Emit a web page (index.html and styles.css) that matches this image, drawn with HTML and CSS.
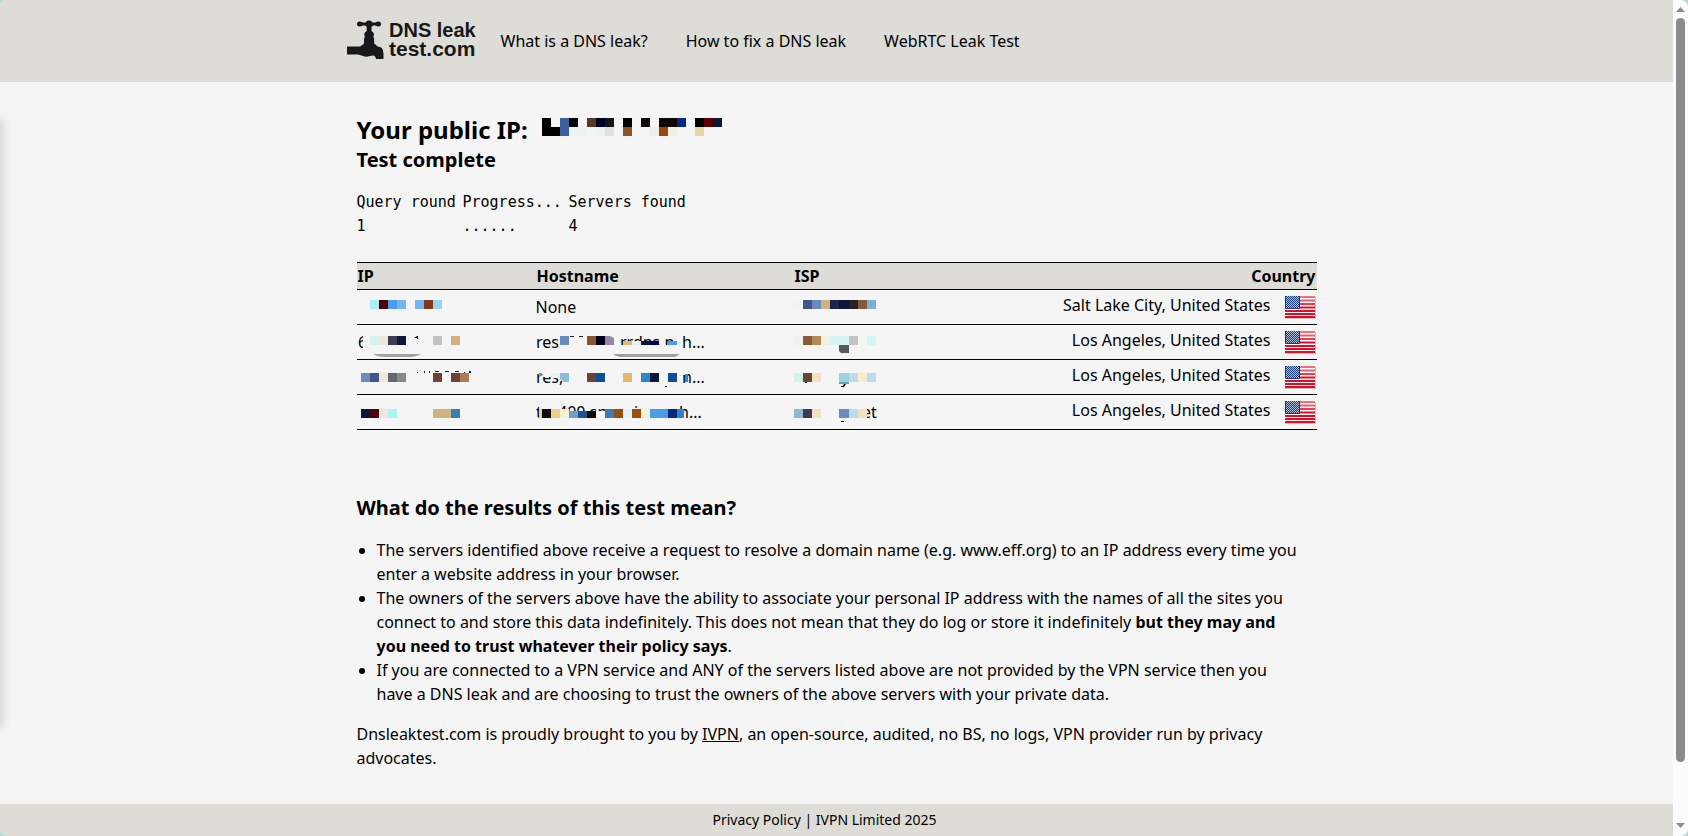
FILE: index.html
```html
<!DOCTYPE html>
<html lang="en">
<head>
<meta charset="utf-8">
<title>DNS leak test</title>
<link rel="stylesheet" href="styles.css">
</head>
<body>
<svg class="defs" aria-hidden="true">
  <defs>
    <pattern id="stars" width="2" height="2" patternUnits="userSpaceOnUse">
      <path fill="#1d3f7f" d="M0 0h2v2H0z"/><path fill="#aebbd8" d="M0 0h1v1H0zM1 1h1v1H1z"/>
    </pattern>
    <linearGradient id="gloss" x1="0" y1="0" x2="0" y2="1">
      <stop offset="0" stop-color="#fff" stop-opacity=".45"/><stop offset="1" stop-color="#fff" stop-opacity=".15"/>
    </linearGradient>
    <symbol id="flag" viewBox="0 0 32 25">
      <path fill="#c4c4c4" d="M1 2h31v22H1z"/>
      <path fill="#fff" d="M1 1h30v22H1z"/>
      <path stroke="#e00d24" stroke-width="2" d="M1 2h30M1 5.500h30M1 9h30M1 12.500h30M1 16h30M1 19h30M1 22h30"/>
      <path fill="url(#gloss)" d="M1 1h30v10H1z"/>
      <path fill="url(#stars)" d="M1 1h15v13H1z"/>
      <path fill="none" stroke="#17397e" d="M1.500 1v12.500h14V1"/>
    </symbol>
  </defs>
</svg>
<div class="window">
  <div class="page">
    <header class="site-header">
      <div class="container header-row">
        <a class="logo" href="#" aria-label="DNS leak test.com">
          <svg width="132" height="44" viewBox="0 0 132 44" fill="#181818">
            <path d="M10 6q0-2.500 2.500-2.500 2 0 3 1h3q1-2 3.500-2t3.500 2h3q1-1 3-1Q34 3.500 34 6t-2.500 2.500q-2 0-3-1H26L24.500 9v4q2.500 1 2.500 3.500l-.6 2.500.8 2v4.500q2 1.500 3.300 3 6 0 6 7V41h-7.500q-.5-3.500-3-3.500-1.500 0-3 .5-4 1.500-7 0-2.500-.8-5-1.500H0V28.500h13q2-1 4-3V21l.8-2-.6-2.500q0-2.500 2.500-3.500V9L18 7.500h-2.500q-1 1-3 1Q10 8.500 10 6z"/>
            <text x="42" y="19" class="logo-top">DNS leak</text>
            <text x="42" y="38" class="logo-bottom">test.com</text>
          </svg>
        </a>
        <nav class="nav">
          <a href="#">What is a DNS leak?</a>
          <a href="#">How to fix a DNS leak</a>
          <a href="#">WebRTC Leak Test</a>
        </nav>
      </div>
    </header>

    <main class="container content">
      <h1>Your public IP:
        <svg class="ip-mask" width="180" height="18" aria-hidden="true">
          <path d="M0 0h9v9h9v9H0zM27 0h9v9h-9zM81 0h9v9h-9zM153 0h9v9h-9z"/>
          <path fill="#3c5f9f" d="M18 0h9v18h-9z"/>
          <path fill="#5b3620" d="M45 0h9v9h-9z"/><path fill="#000024" d="M54 0h9v9h-9z"/><path fill="#181510" d="M63 0h9v9h-9z"/>
          <path fill="#100804" d="M99 0h9v9h-9zM117 0h18v9h-18z"/><path fill="#002a88" d="M135 0h9v9h-9z"/>
          <path fill="#5a0000" d="M162 0h9v9h-9z"/><path fill="#0a1638" d="M171 0h9v9h-9z"/>
          <path fill="#eaf4f2" d="M27 9h18v9H27zM54 9h9v9h-9z"/><path fill="#e0e0e2" d="M63 9h9v9h-9z"/>
          <path fill="#8a5528" d="M81 9h9v9h-9z"/><path fill="#eeeeec" d="M108 9h9v9h-9z"/>
          <path fill="#984a0c" d="M117 9h9v9h-9z"/><path fill="#f2eee2" d="M126 9h9v9h-9z"/><path fill="#e5d8a0" d="M153 9h9v9h-9z"/>
        </svg>
      </h1>
      <h2 class="status">Test complete</h2>

      <table class="progress">
        <tr><td>Query round</td><td>Progress...</td><td>Servers found</td></tr>
        <tr><td>1</td><td>......</td><td>4</td></tr>
      </table>

      <table class="results">
        <thead>
          <tr><th class="col-ip">IP</th><th class="col-host">Hostname</th><th class="col-isp">ISP</th><th class="col-country">Country</th></tr>
        </thead>
        <tbody>
          <tr>
            <td><svg class="mask" width="170" height="34">
              <path fill="#a8f0f3" d="M13 10h9v9h-9z"/><path fill="#4f0008" d="M22 10h9v9h-9z"/><path fill="#4a9de8" d="M31 10h9v9h-9z"/><path fill="#73b5f2" d="M40 10h9v9h-9zM58 10h9v9h-9z"/><path fill="#803818" d="M67 10h9v9h-9z"/><path fill="#96d5ee" d="M76 10h9v9h-9z"/></svg></td>
            <td class="host">None</td>
            <td><svg class="mask" width="90" height="34">
              <path fill="#f2f2f2" d="M0 12h8v6H0z"/><path fill="#3f5890" d="M9 10h9v9H9z"/><path fill="#6b8cba" d="M18 10h9v9h-9z"/><path fill="#d2b285" d="M27 10h9v9h-9z"/><path fill="#20244a" d="M36 10h9v9h-9z"/><path fill="#0c1838" d="M45 10h10v9H45z"/><path fill="#2f1a28" d="M55 10h9v9h-9z"/><path fill="#855a3c" d="M64 10h9v9h-9z"/><path fill="#7ab0d0" d="M73 10h9v9h-9z"/></svg></td>
            <td class="country"><span>Salt Lake City, United States</span><svg width="32" height="25"><use href="#flag"/></svg></td>
          </tr>
          <tr>
            <td><svg class="mask" width="170" height="34">
              <text x="1" y="23">6</text><path fill="#f5f5f5" d="M6 8h8v17H6z"/>
              <path d="M57 13l3-2h1v3h-1v-1z"/>
              <path fill="#d5f3f3" d="M13 11h9v9h-9z"/><path fill="#f0e6da" d="M22 11h9v9h-9z"/><path fill="#3c3c52" d="M31 11h9v9h-9z"/><path fill="#0c1838" d="M40 11h9v9h-9z"/><path fill="#bfc3c1" d="M76 11h9v9h-9z"/><path fill="#d2b27f" d="M94 11h9v9h-9z"/>
              <path fill="#a0a0a0" d="M16 29h48q-5 3-12 3H28q-7 0-12-3z"/></svg></td>
            <td><svg class="mask" width="180" height="34">
              <text x="0" y="23">res</text><text x="84" y="23">rrdns.n</text><text x="146" y="23">h...</text>
              <path fill="#f5f5f5" d="M84 20h62v8H84z"/>
              <path fill="#222" d="M24 11h4v1h-4zM34 11h4v1h-4zM43 11h4v1h-4z"/>
              <path fill="#6b8cba" d="M24 11h9v9h-9z"/><path fill="#865531" d="M51 11h9v9h-9z"/><path fill="#000018" d="M60 11h9v9h-9z"/><path fill="#9385ae" d="M69 11h5l4 2v7h-9z"/>
              <path fill="#e6b870" d="M87 16h9v4h-9z"/><path fill="#e8f0f0" d="M96 16h9v4h-9z"/><path fill="#0c1838" d="M105 16h9v4h-9z"/><path fill="#000050" d="M114 16h9v4h-9z"/><path fill="#4a9de8" d="M132 16h9v4h-9z"/><path fill="#d5f3ff" d="M141 16h4v4h-4z"/>
              <path fill="#a0a0a0" d="M77 29h67l-5 3H84q-5-1-7-3z"/></svg></td>
            <td><svg class="mask" width="90" height="34">
              <path fill="#f0f0f0" d="M0 11h9v9H0z"/><path fill="#865b38" d="M9 11h9v9H9z"/><path fill="#b58a55" d="M18 11h9v9h-9z"/><path fill="#f3f0e0" d="M27 11h9v9h-9z"/><path fill="#d5f6f6" d="M36 11h19v9H36zM73 11h9v9h-9z"/><path fill="#bfc3c1" d="M55 11h9v9h-9z"/><path fill="#55585c" d="M45 20h10v8h-8l-2-2z"/></svg></td>
            <td class="country"><span>Los Angeles, United States</span><svg width="32" height="25"><use href="#flag"/></svg></td>
          </tr>
          <tr>
            <td><svg class="mask" width="170" height="34">
              <path fill="#222" d="M60 12h1v1h-1zM67 11h1v2h-1zM72 11h1v2h-1zM78 11h4v1h-4zM88 11h4v1h-4zM98 11h4v1h-4zM107 12h1v1h-1zM112 11h2v2h-2z"/>
              <path fill="#6b8cba" d="M4 13h9v9H4z"/><path fill="#43568a" d="M13 13h9v9h-9z"/><path fill="#f0e6da" d="M22 13h9v9h-9z"/><path fill="#65676c" d="M31 13h9v9h-9z"/><path fill="#8a8a8a" d="M40 13h9v9h-9z"/><path fill="#6b4335" d="M76 13h9v9h-9zM94 13h9v9h-9z"/><path fill="#ad7d58" d="M103 13h9v9h-9z"/></svg></td>
            <td><svg class="mask" width="180" height="34">
              <text x="0" y="23">res,</text><text x="146" y="23">h...</text>
              <path fill="#f5f5f5" d="M7 12h8v5H7zM145 9h6v6h-6z"/><path fill="#b08060" d="M3 13h3v3H3z"/>
              <path fill="#e5f3f0" d="M15 13h9v5h-9z"/><path fill="#8dbcd4" d="M24 13h9v9h-5l-4-3z"/><path fill="#6b4335" d="M51 13h9v9h-9z"/><path fill="#0c4f98" d="M60 13h9v9h-9zM132 13h9v9h-9z"/><path fill="#e8b870" d="M87 13h9v9h-9z"/><path fill="#2b86d2" d="M105 13h9v9h-9zM149 14h3v8h-3z"/><path fill="#0c1838" d="M114 13h9v9h-9z"/><path d="M129 26h2v1h-2z"/></svg></td>
            <td><svg class="mask" width="90" height="34">
              <path fill="#cff5e6" d="M0 13h9v9H0z"/><path fill="#6b4335" d="M9 13h9v9H9z"/><path fill="#f2e0c0" d="M18 13h9v9h-9z"/><path fill="#98d5e0" d="M45 13h10v9H45z"/><path fill="#bcdcf4" d="M55 13h9v9h-9zM73 13h9v9h-9z"/><path fill="#f8ecca" d="M64 13h9v9h-9z"/><path fill="#6b9cba" d="M45 22h10v2H45z"/><path d="M11 22h2v1h-2zM50 24h2l-2 3h-3v-1h2z"/></svg></td>
            <td class="country"><span>Los Angeles, United States</span><svg width="32" height="25"><use href="#flag"/></svg></td>
          </tr>
          <tr>
            <td><svg class="mask" width="170" height="34">
              <path fill="#0c1838" d="M4 14h9v9H4z"/><path fill="#4f0008" d="M13 14h9v9h-9z"/><path fill="#f0e6da" d="M22 14h9v9h-9z"/><path fill="#a8f5f5" d="M31 14h9v9h-9z"/><path fill="#d0b27d" d="M76 14h18v9H76z"/><path fill="#3a7cb8" d="M94 14h9v9h-9z"/></svg></td>
            <td><svg class="mask" width="180" height="34">
              <text x="0" y="23">t</text><text x="22" y="23">400.sn</text><text x="98" y="23">i</text><text x="143" y="23">h...</text>
              <path fill="#f5f5f5" d="M22 16h118v10H22z"/>
              <path fill="#f2ce8c" d="M3 14h3v9H3zM15 14h9v9h-9z"/><path fill="#0f0c08" d="M6 14h9v9H6zM51 16h9v7h-9z"/><path fill="#f5f2cf" d="M24 14h9v9h-9zM105 14h9v9h-9z"/><path fill="#6ba2cc" d="M33 16h9v7h-9z"/><path fill="#1f529a" d="M42 16h9v7h-9z"/><path fill="#3a7cb8" d="M69 14h9v9h-9z"/><path fill="#984f12" d="M78 14h9v9h-9zM96 14h9v9h-9z"/><path fill="#e2f3f5" d="M87 14h9v9h-9z"/><path fill="#4a9de8" d="M114 14h18v9h-18z"/><path fill="#0c2a7c" d="M132 14h9v9h-9z"/><path fill="#2b86d2" d="M141 14h7v9h-7z"/></svg></td>
            <td><svg class="mask" width="90" height="34">
              <text x="68" y="23">et</text>
              <path fill="#f5f5f5" d="M64 12h9v13h-9z"/>
              <path fill="#8bbad6" d="M0 14h9v9H0z"/><path fill="#3c3c52" d="M9 14h9v9H9z"/><path fill="#f2e0c0" d="M18 14h9v9h-9zM64 14h9v9h-9z"/><path fill="#6b8cba" d="M45 14h10v9H45z"/><path fill="#bcdcf4" d="M55 14h9v9h-9z"/><path d="M47 26h3v1h-3z"/></svg></td>
            <td class="country"><span>Los Angeles, United States</span><svg width="32" height="25"><use href="#flag"/></svg></td>
          </tr>
        </tbody>
      </table>

      <h2 class="meaning">What do the results of this test mean?</h2>
      <ul>
        <li>The servers identified above receive a request to resolve a domain name (e.g. www.eff.org) to an IP address every time you enter a website address in your browser.</li>
        <li>The owners of the servers above have the ability to associate your personal IP address with the names of all the sites you connect to and store this data indefinitely. This does not mean that they do log or store it indefinitely <strong>but they may and you need to trust whatever their policy says</strong>.</li>
        <li>If you are connected to a VPN service and ANY of the servers listed above are not provided by the VPN service then you have a DNS leak and are choosing to trust the owners of the above servers with your private data.</li>
      </ul>
      <p>Dnsleaktest.com is proudly brought to you by <a href="#">IVPN</a>, an open-source, audited, no BS, no logs, VPN provider run by privacy advocates.</p>
    </main>

    <footer class="site-footer"><a href="#">Privacy Policy</a> | IVPN Limited 2025</footer>
    <div class="edge-shadow"></div>
  </div>
  <div class="scrollbar" aria-hidden="true">
    <svg width="9" height="6"><path fill="#8b8b8b" d="M4.500 0L9 5H0z"/></svg>
    <div class="track"><div class="thumb"></div></div>
    <svg width="9" height="6"><path fill="#8b8b8b" d="M0 0h9L4.500 5z"/></svg>
  </div>
</div>
</body>
</html>
```
FILE: styles.css
```css
* { box-sizing: border-box; }
body {
  margin: 0;
  background: #b9d9d3;
  color: #000;
  font: 16px/24px "Noto Sans", "Open Sans", sans-serif;
}
a { color: inherit; text-decoration: none; }
.defs { position: absolute; width: 0; height: 0; }
.window {
  display: flex;
  min-height: 100vh;
  border-radius: 8px;
  overflow: hidden;
  background: #f5f5f5;
}
.page {
  position: relative;
  flex: 1;
  display: flex;
  flex-direction: column;
  overflow: hidden;
}
.container { width: 100%; max-width: 960px; margin: 0 auto; }

.site-header { background: #dddcd7; height: 82px; }
.header-row { display: flex; align-items: flex-start; padding-top: 18px; }
.logo { margin-left: -10px; height: 46px; }
.logo svg { display: block; overflow: visible; }
.logo text { font-family: "Liberation Sans", Arial, sans-serif; font-weight: bold; }
.logo-top { font-size: 20px; }
.logo-bottom { font-size: 21px; }
.nav { display: flex; gap: 38px; margin-left: 22px; padding-top: 11px; }

.content { flex: 1; padding-top: 32px; }
h1, h2 { margin: 0; font-weight: bold; }
h1 { display: flex; align-items: flex-start; gap: 14px; font-size: 24px; line-height: 32px; }
.ip-mask { margin-top: 4px; }
.status { font-size: 20px; line-height: 28px; }

.progress { margin-top: 16px; border-collapse: collapse; font: 15px/24px "DejaVu Sans Mono", monospace; }
.progress td { padding: 0; min-width: 106px; }

.results { width: 100%; margin-top: 24px; table-layout: fixed; border-collapse: collapse; }
.results th, .results td { padding: 0; text-align: left; border-bottom: 1px solid #000; }
.results th { height: 26px; padding: 0 1px; line-height: 26px; background: #dddcd7; border-top: 1px solid #000; }
.results td { height: 35px; }
.col-ip { width: 179px; }
.col-host { width: 258px; }
.col-isp { width: 180px; }
.results .col-country { text-align: right; }
.mask { display: block; overflow: visible; }
.country { vertical-align: top; }
.country span { display: inline-block; padding-top: 3px; margin-right: 13px; }
.results .country { text-align: right; padding-right: 1px; }
.country svg { vertical-align: top; margin-top: 5px; }

.meaning { margin-top: 64px; font-size: 20px; line-height: 28px; }
ul { margin: 16px 0; padding: 0 16px 0 20px; }
p { margin: 0 0 32px; }
p a { text-decoration: underline; }

.site-footer {
  height: 32px;
  padding-right: 24px;
  line-height: 32px;
  background: #dddcd7;
  text-align: center;
  font-size: 14px;
}
.edge-shadow {
  position: absolute;
  top: 122px;
  bottom: 112px;
  left: -20px;
  width: 20px;
  box-shadow: 0 0 10px 3px rgba(0, 0, 0, .14);
}

.scrollbar {
  width: 15px;
  display: flex;
  flex-direction: column;
  align-items: center;
  padding: 7px 0;
  background: #fcfcfc;
}
.track { flex: 1; padding: 5px 0; }
.thumb { width: 9px; height: 93%; border-radius: 5px; background: #8b8b8b; }
```
